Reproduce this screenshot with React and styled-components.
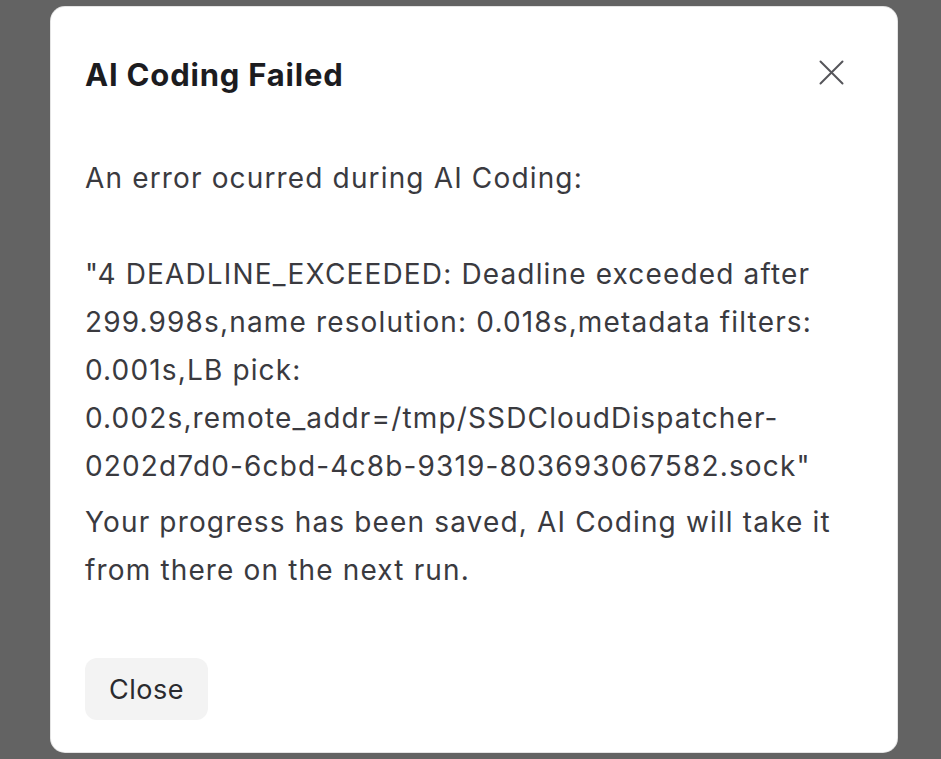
import React from "react";
import styled, { createGlobalStyle } from "styled-components";

const Global = createGlobalStyle`
  html, body { margin: 0; padding: 0; height: 100%; }
  body { background: #636363; font-family: Inter, "Noto Sans", sans-serif; }
  #root { height: 100%; }
`;

const Overlay = styled.div`
  width: 941px;
  height: 759px;
  box-sizing: border-box;
  padding: 7px 44px 7px 51px;
  display: flex;
`;

const Dialog = styled.div`
  flex: 1;
  background: #ffffff;
  border-radius: 14px;
  box-shadow: 0 0 0 1px #e4e4e4;
  padding: 48px 34px 32px 34px;
  display: flex;
  flex-direction: column;
  color: #2a2a2e;
`;

const Header = styled.div`
  display: flex;
  align-items: center;
  justify-content: space-between;
`;

const Title = styled.h2`
  margin: 0;
  font-size: 31px;
  font-weight: 700;
  line-height: 40px;
  color: #1c1c1f;
  letter-spacing: 0.8px;
`;

const CloseIcon = styled.button`
  border: 0;
  background: transparent;
  padding: 0;
  width: 25px;
  height: 25px;
  margin-right: 19px;
  margin-top: -6px;
  display: flex;
  align-items: center;
  justify-content: center;
  cursor: pointer;
`;

const Body = styled.div`
  margin-top: 59px;
  font-size: 28px;
  line-height: 48px;
  letter-spacing: 1.15px;
  color: #3a3a3f;
`;

const Para = styled.p`
  margin: 0 0 ${(p) => p.$gap || 0}px 0;
  white-space: pre-wrap;
  overflow-wrap: anywhere;
`;

const Footer = styled.div`
  margin-top: auto;
`;

const Button = styled.button`
  border: 0;
  background: #f3f3f3;
  border-radius: 12px;
  padding: 0 24px;
  height: 62px;
  font-family: inherit;
  font-size: 27px;
  letter-spacing: 0.5px;
  color: #2a2a2e;
  cursor: pointer;
`;

export default function App() {
  return (
    <>
      <Global />
      <Overlay>
        <Dialog>
          <Header>
            <Title>AI Coding Failed</Title>
            <CloseIcon aria-label="Close">
              <svg width="25" height="25" viewBox="0 0 25 25" fill="none" stroke="#55555a" strokeWidth="2" strokeLinecap="round">
                <path d="M1.5 1.5L23.5 23.5M23.5 1.5L1.5 23.5" />
              </svg>
            </CloseIcon>
          </Header>
          <Body>
            <Para $gap={8}>{"An error ocurred during AI Coding:\n\n\"4 DEADLINE_EXCEEDED: Deadline exceeded after 299.998s,name resolution: 0.018s,metadata filters: 0.001s,LB pick: 0.002s,remote_addr=/tmp/SSDCloudDispatcher-0202d7d0-6cbd-4c8b-9319-803693067582.sock\""}</Para>
            <Para>Your progress has been saved, AI Coding will take it from there on the next run.</Para>
          </Body>
          <Footer>
            <Button>Close</Button>
          </Footer>
        </Dialog>
      </Overlay>
    </>
  );
}
